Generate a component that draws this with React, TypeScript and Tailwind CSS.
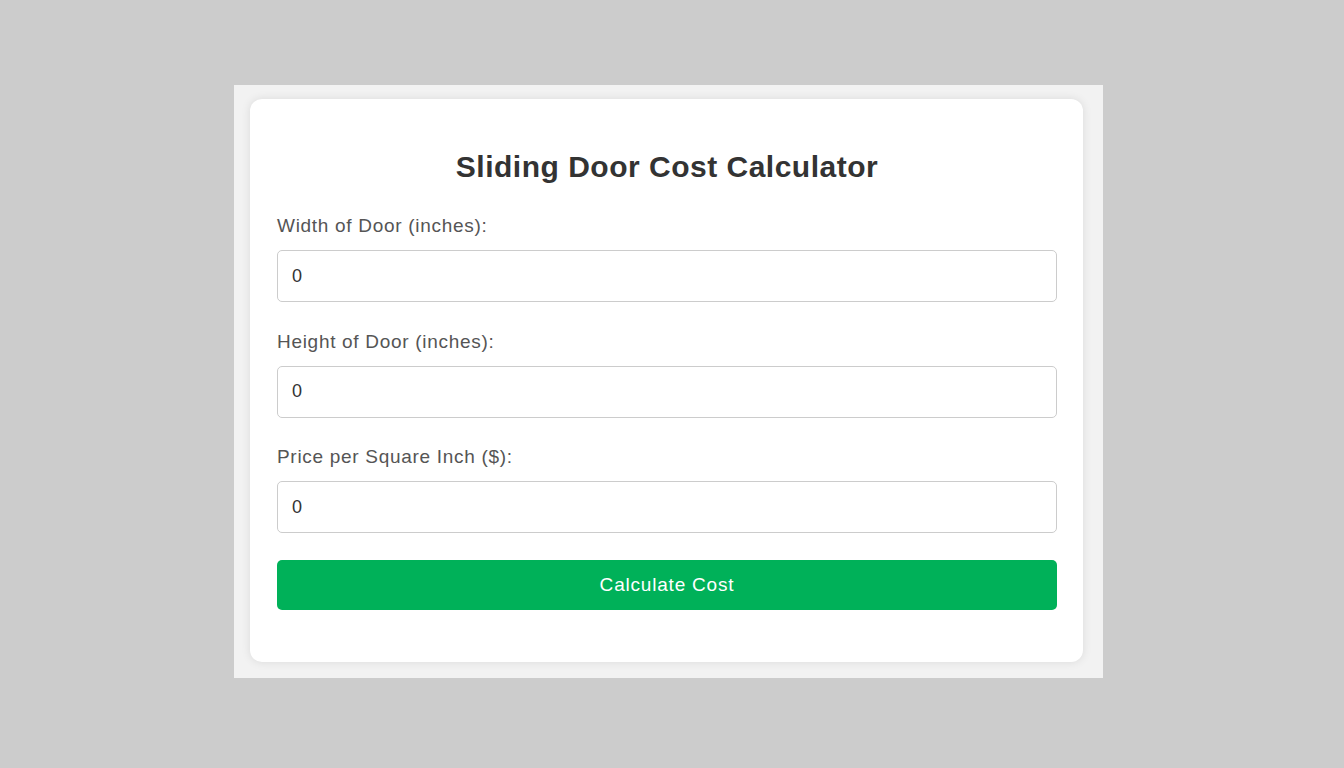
import { useState } from "react";

const fields = [
  { id: "width", label: "Width of Door (inches):" },
  { id: "height", label: "Height of Door (inches):" },
  { id: "price", label: "Price per Square Inch ($):" },
];

export default function App() {
  const [values, setValues] = useState<Record<string, string>>({
    width: "0",
    height: "0",
    price: "0",
  });

  return (
    <div
      className="min-h-screen bg-[#cccccc] pl-[234px] pt-[85px]"
      style={{ fontFamily: '"Liberation Sans", Arial, sans-serif' }}
    >
      <div className="w-[869px] bg-[#f2f2f2] pb-4 pl-4 pr-5 pt-[14px]">
        <div className="rounded-[12px] bg-white pb-[52px] pl-[27px] pr-[26px] pt-[52px] shadow-[0_0_10px_rgba(0,0,0,0.1)]">
          <h1 className="mb-[32px] text-center text-[30px] font-bold leading-[32px] tracking-[0.5px] text-[#333333]">
            Sliding Door Cost Calculator
          </h1>

          <div className="flex flex-col gap-[28.5px]">
            {fields.map((f) => (
              <div key={f.id} className="flex flex-col">
                <label
                  htmlFor={f.id}
                  className="mb-[14px] text-[19px] leading-[21px] tracking-[0.7px] text-[#555555]"
                >
                  {f.label}
                </label>
                <input
                  id={f.id}
                  type="number"
                  value={values[f.id]}
                  onChange={(e) =>
                    setValues({ ...values, [f.id]: e.target.value })
                  }
                  className="h-[52px] w-full rounded-[5px] border border-[#cccccc] bg-white px-[14px] text-[18px] text-[#333333] outline-none"
                />
              </div>
            ))}
          </div>

          <button className="mt-[27px] h-[50px] w-full rounded-[5px] bg-[#00b159] text-[19px] tracking-[0.8px] text-white">
            Calculate Cost
          </button>
        </div>
      </div>
    </div>
  );
}
